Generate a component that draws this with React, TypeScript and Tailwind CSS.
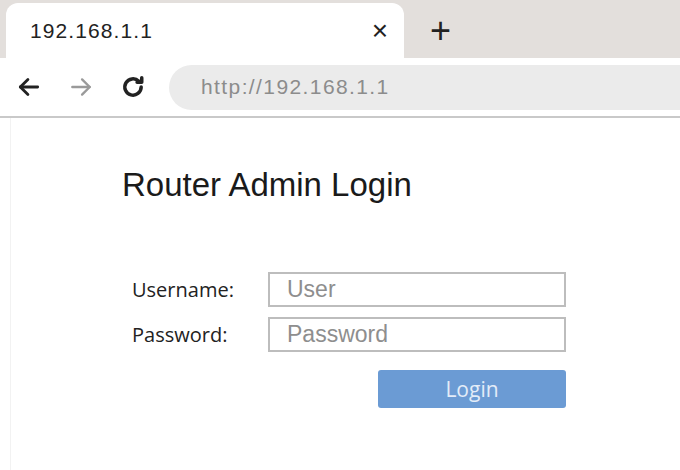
import React from 'react'

const ArrowLeft = ({ className }: { className?: string }) => (
    <svg viewBox="0 0 24 24" className={className} fill="none" stroke="currentColor" strokeWidth="2.6" strokeLinecap="round" strokeLinejoin="round">
        <path d="M20 12H4" />
        <path d="M11 5l-7 7 7 7" />
    </svg>
)

const ArrowRight = ({ className }: { className?: string }) => (
    <svg viewBox="0 0 24 24" className={className} fill="none" stroke="currentColor" strokeWidth="2.2" strokeLinecap="round" strokeLinejoin="round">
        <path d="M4 12h16" />
        <path d="M13 5l7 7-7 7" />
    </svg>
)

const Reload = ({ className }: { className?: string }) => (
    <svg viewBox="0 0 24 24" className={className} fill="none" stroke="currentColor" strokeWidth="3" strokeLinecap="round" strokeLinejoin="round">
        <path d="M19 12a7 7 0 1 1-2.05-4.95" />
        <path d="M19.5 4v4h-4" fill="currentColor" />
    </svg>
)

export default function App() {
    return (
        <div className="w-[680px] h-[470px] bg-white flex flex-col overflow-hidden" style={{ fontFamily: '"Liberation Sans", Arial, sans-serif' }}>
            {/* Tab strip */}
            <div className="h-[58px] bg-[#e3dfdc] flex items-end pl-[6px]">
                <div className="w-[398px] h-[55px] bg-white rounded-t-[12px] flex items-center pl-[24px] pr-[16px]">
                    <span className="text-[21px] tracking-[1.1px] text-[#222] flex-1">192.168.1.1</span>
                    <span className="text-[28px] text-[#222] leading-none">×</span>
                </div>
                <div className="h-[55px] flex items-center pl-[26px]">
                    <span className="text-[36px] text-[#222] leading-none">+</span>
                </div>
            </div>

            {/* Toolbar */}
            <div className="h-[60px] bg-white flex items-center border-b-2 border-[#c9c9c9]">
                <ArrowLeft className="w-[26px] h-[26px] text-[#222] ml-[16px]" />
                <ArrowRight className="w-[26px] h-[26px] text-[#9a9a9a] ml-[26px]" />
                <Reload className="w-[28px] h-[28px] text-[#222] ml-[25px]" />
                <div className="ml-[22px] flex-1 h-[45px] bg-[#ebebeb] rounded-l-full flex items-center pl-[32px]">
                    <span className="text-[21px] tracking-[1.4px] text-[#8c8c8c]">http://192.168.1.1</span>
                </div>
            </div>

            {/* Page */}
            <div className="flex-1 ml-[10px] border-l border-[#f2f2f2] pl-[111px] pt-[50px]">
                <h1 className="text-[33px] text-[#1a1a1a] leading-none">Router Admin Login</h1>

                <div className="mt-[71px] w-[444px] flex flex-col gap-[10px]" style={{ fontFamily: '"Open Sans", "Noto Sans", sans-serif' }}>
                    <div className="flex items-center">
                        <label className="w-[146px] pl-[10px] text-[20px] leading-none text-[#222]">Username:</label>
                        <div className="w-[298px] h-[35px] border-2 border-[#bdbdbd] flex items-center pl-[17px]">
                            <span className="text-[23px] text-[#8e8e8e]" style={{ fontFamily: '"Liberation Sans", Arial, sans-serif' }}>User</span>
                        </div>
                    </div>
                    <div className="flex items-center">
                        <label className="w-[146px] pl-[10px] text-[20px] leading-none text-[#222]">Password:</label>
                        <div className="w-[298px] h-[35px] border-2 border-[#bdbdbd] flex items-center pl-[17px]">
                            <span className="text-[23px] text-[#8e8e8e]" style={{ fontFamily: '"Liberation Sans", Arial, sans-serif' }}>Password</span>
                        </div>
                    </div>
                    <div className="flex justify-end mt-[8px]">
                        <button className="w-[188px] h-[38px] bg-[#6b9bd4] rounded-[3px] text-[21px] leading-none text-[#e3ecf8]">Login</button>
                    </div>
                </div>
            </div>
        </div>
    )
}
